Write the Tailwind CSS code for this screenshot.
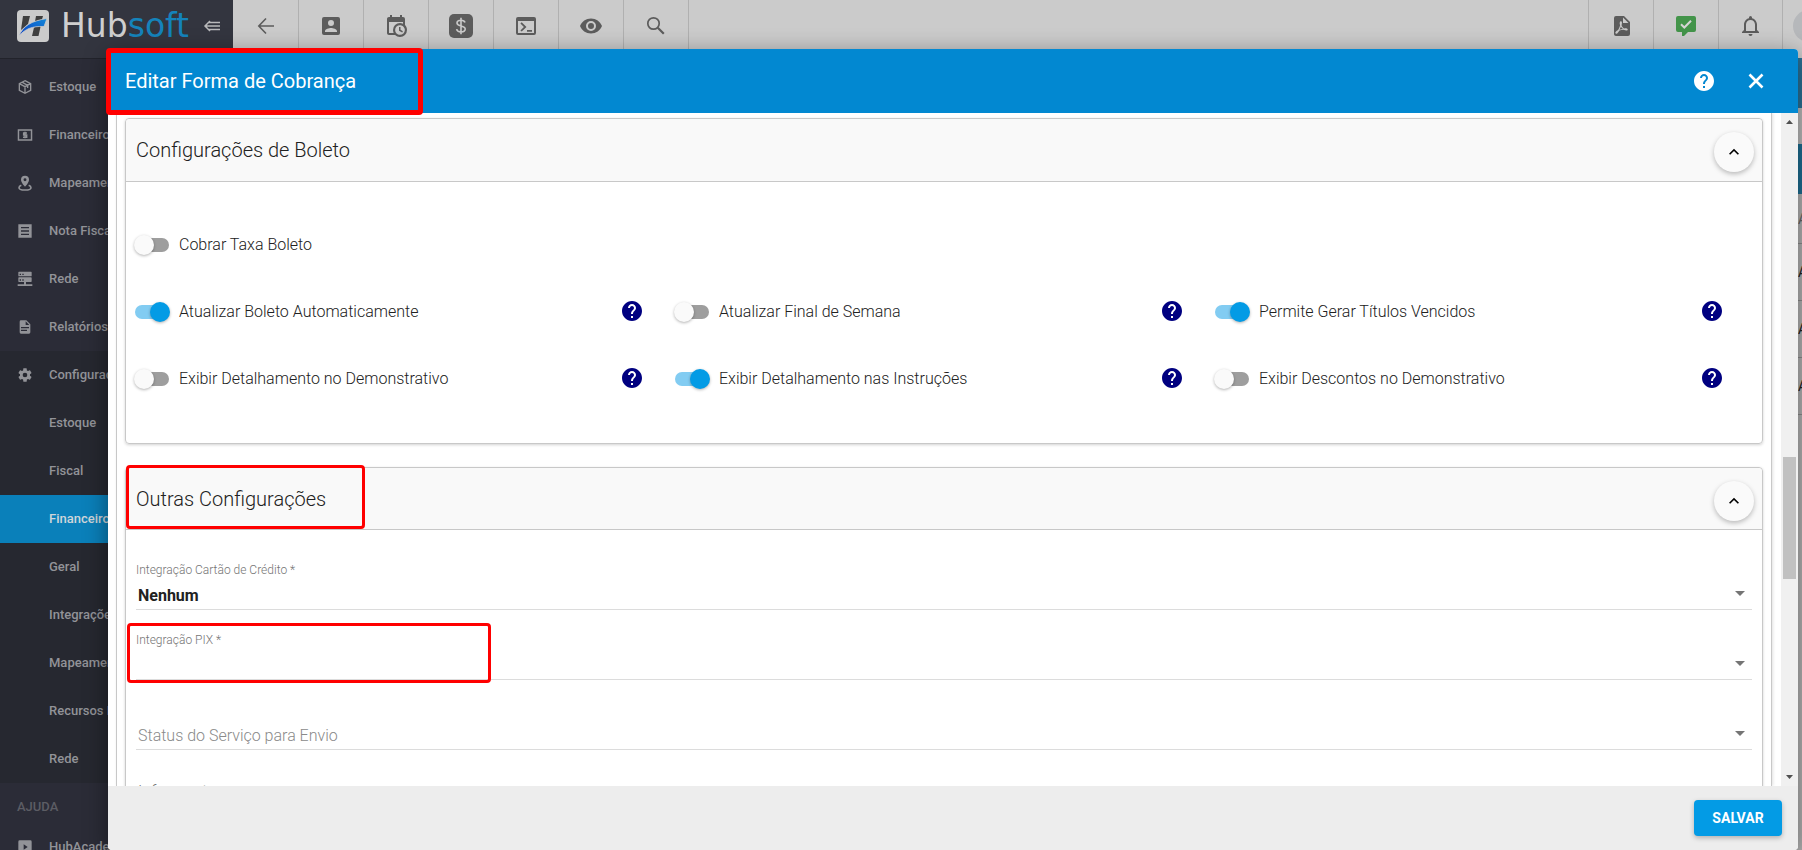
<!DOCTYPE html>
<html lang="pt-BR">
<head>
<meta charset="utf-8">
<title>Hubsoft - Editar Forma de Cobrança</title>
<script src="https://cdn.jsdelivr.net/npm/@tailwindcss/browser@4"></script>
</head>
<body class="relative flex h-screen overflow-hidden bg-[#b4b4b4] font-['Roboto',sans-serif] text-[#212121]">

<svg class="hidden" aria-hidden="true">
  <symbol id="help" viewBox="0 0 24 24"><path d="M12 2C6.48 2 2 6.48 2 12s4.48 10 10 10 10-4.48 10-10S17.52 2 12 2zm1 17h-2v-2h2v2zm2.07-7.75l-.9.92C13.45 12.9 13 13.5 13 15h-2v-.5c0-1.1.45-2.1 1.17-2.83l1.24-1.26c.37-.36.59-.86.59-1.41 0-1.1-.9-2-2-2s-2 .9-2 2H8c0-2.21 1.79-4 4-4s4 1.79 4 4c0 .88-.36 1.68-.93 2.25z"/></symbol>
  <symbol id="chevron" viewBox="0 0 24 24"><path d="M7.41 15.41L12 10.83l4.59 4.58L18 14l-6-6-6 6z"/></symbol>
  <symbol id="caret" viewBox="0 0 10 5"><path d="M0 0h10L5 5z"/></symbol>
</svg>

<!-- Sidebar -->
<aside class="flex w-[233px] shrink-0 flex-col bg-[#2b2c37] text-[13px] font-medium text-[#929398]">
  <div class="flex h-[59px] shrink-0 items-center border-b border-[#22232b] bg-[#33353f] pb-1.5 pl-[17px]">
    <svg class="h-8 w-8 shrink-0" viewBox="0 0 32 32">
      <defs><linearGradient id="swoosh" x1="0" y1="1" x2="1" y2="0"><stop offset="0" stop-color="#0a3fc4"/><stop offset="1" stop-color="#1288d8"/></linearGradient></defs>
      <rect width="32" height="32" rx="4" fill="#cbcbcb"/>
      <path d="M6 6h7l-2 8-7 6z" fill="#3f3f3f"/>
      <path d="M19 6h7l-1 3.500-7 2zM17 17.500l7-3L21.500 26H15z" fill="#3f3f3f"/>
      <path d="M2 26C6 16 14 11 30 8.500l-3 8C15 16 8 19 2 26z" fill="url(#swoosh)" stroke="#cbcbcb" stroke-width=".8"/>
    </svg>
    <span class="ml-3 w-[142px] font-['DejaVu_Sans',sans-serif] text-[33px] leading-8 font-normal text-[#cfcfcf]">Hub<span class="text-[#1583bb]">soft</span></span>
    <button type="button" aria-label="Recolher menu" class="text-[#b9b9bb]">
      <svg class="h-4 w-5" viewBox="0 0 20 16" fill="none" stroke="currentColor" stroke-width="1.500"><path d="M7 3L2 8l5 5M6 4.500h11M3 8h14M6 11.500h11"/></svg>
    </button>
  </div>
  <nav class="pt-1">
    <a href="#" class="flex h-12 items-center gap-4 pl-[17px]"><svg class="h-4 w-4 shrink-0" viewBox="0 0 24 24" fill="none" stroke="currentColor" stroke-width="2"><path d="M12 2.500l8.500 4.500v10L12 21.500 3.500 17V7zM3.500 7L12 11.500 20.500 7M12 11.500v10M7.500 4.800L16 9.500v4"/></svg>Estoque</a>
    <a href="#" class="flex h-12 items-center gap-4 pl-[17px]"><svg class="h-4 w-4 shrink-0" viewBox="0 0 24 24" fill="none" stroke="currentColor" stroke-width="2.200"><path d="M2.200 4.500h19.600v15H2.200z"/><path d="M15 9h-5v3h4.500v3.500H9M12 7v10"/></svg>Financeiro</a>
    <a href="#" class="flex h-12 items-center gap-4 pl-[17px] whitespace-nowrap"><svg class="h-4 w-4 shrink-0" viewBox="0 0 24 24"><path fill="currentColor" fill-rule="evenodd" d="M12 1a6 6 0 0 0-6 6c0 4.500 6 10.500 6 10.500S18 11.500 18 7a6 6 0 0 0-6-6zm0 8.200a2.200 2.200 0 1 1 0-4.400 2.200 2.200 0 0 1 0 4.400z"/><path d="M6.500 15.500C4 16.500 3 17.500 3 19c0 2 4 3.500 9 3.500s9-1.500 9-3.500c0-1.500-1-2.500-3.500-3.500" fill="none" stroke="currentColor" stroke-width="2.400"/></svg>Mapeamento</a>
    <a href="#" class="flex h-12 items-center gap-4 pl-[17px] whitespace-nowrap"><svg class="h-4 w-4 shrink-0" viewBox="0 0 24 24"><path fill="currentColor" fill-rule="evenodd" d="M2 2h20v20H2zM6 6v2h12V6zM6 11v2h12v-2zM6 16v2h12v-2z"/></svg>Nota Fiscal</a>
    <a href="#" class="flex h-12 items-center gap-4 pl-[17px]"><svg class="h-4 w-4 shrink-0" viewBox="0 0 24 24"><path fill="currentColor" fill-rule="evenodd" d="M3 1h18a1 1 0 0 1 1 1v5a1 1 0 0 1-1 1H3a1 1 0 0 1-1-1V2a1 1 0 0 1 1-1zm1 3v2h2V4zm4 0v2h2V4zM3 9.500h18a1 1 0 0 1 1 1v5a1 1 0 0 1-1 1h-7.500V20H23v2.500H1V20h9.500v-3.500H3a1 1 0 0 1-1-1v-5a1 1 0 0 1 1-1zm1 3v2h2v-2zm4 0v2h2v-2z"/></svg>Rede</a>
    <a href="#" class="flex h-12 items-center gap-4 pl-[17px]"><svg class="h-4 w-4 shrink-0" viewBox="0 0 24 24"><path fill="currentColor" d="M13 9h5.500L13 3.500V9M6 2h8l6 6v12a2 2 0 0 1-2 2H6a2 2 0 0 1-2-2V4a2 2 0 0 1 2-2m9 16v-2H6v2h9m3-4v-2H6v2h12z"/></svg>Relatórios</a>
    <div class="bg-[#262830]">
      <a href="#" class="flex h-12 items-center gap-4 pl-[17px] whitespace-nowrap"><svg class="h-4 w-4 shrink-0" viewBox="0 0 24 24"><path fill="currentColor" d="M12 15.500A3.500 3.500 0 0 1 8.500 12 3.500 3.500 0 0 1 12 8.500a3.500 3.500 0 0 1 3.500 3.500 3.500 3.500 0 0 1-3.500 3.500m7.430-2.530c.04-.32.070-.64.070-.97 0-.33-.03-.66-.07-1l2.110-1.630c.19-.15.240-.42.120-.64l-2-3.460c-.12-.22-.39-.31-.61-.22l-2.490 1c-.52-.39-1.060-.73-1.690-.98l-.37-2.650A.506.506 0 0 0 14 2h-4c-.25 0-.46.180-.5.420l-.37 2.650c-.63.250-1.170.590-1.690.980l-2.490-1c-.22-.09-.49 0-.61.220l-2 3.460c-.13.220-.07.490.120.640L4.570 11c-.04.340-.07.670-.07 1 0 .330.030.650.070.970l-2.110 1.660c-.19.150-.25.420-.12.640l2 3.460c.12.220.39.300.61.220l2.490-1.010c.52.400 1.060.740 1.690.990l.37 2.650c.04.240.25.420.5.420h4c.25 0 .46-.18.500-.42l.37-2.650c.63-.26 1.170-.59 1.690-.99l2.490 1.010c.22.080.49 0 .61-.22l2-3.460c.12-.22.070-.49-.12-.64l-2.110-1.660z"/></svg>Configurações</a>
      <a href="#" class="flex h-12 items-center pl-[49px]">Estoque</a>
      <a href="#" class="flex h-12 items-center pl-[49px]">Fiscal</a>
      <a href="#" class="flex h-12 items-center bg-[#0a80ba] pl-[49px] text-[#cfd6da]">Financeiro</a>
      <a href="#" class="flex h-12 items-center pl-[49px]">Geral</a>
      <a href="#" class="flex h-12 items-center pl-[49px]">Integrações</a>
      <a href="#" class="flex h-12 items-center pl-[49px]">Mapeamento</a>
      <a href="#" class="flex h-12 items-center pl-[49px]">Recursos Humanos</a>
      <a href="#" class="flex h-12 items-center pl-[49px]">Rede</a>
    </div>
    <h2 class="flex h-10 items-center pt-2 pl-[17px] text-[#5c5d64]">AJUDA</h2>
    <a href="#" class="flex h-12 items-center gap-4 pl-[17px]"><svg class="h-4 w-4 shrink-0" viewBox="0 0 24 24"><path fill="currentColor" fill-rule="evenodd" d="M4 2h16a2 2 0 0 1 2 2v16a2 2 0 0 1-2 2H4a2 2 0 0 1-2-2V4a2 2 0 0 1 2-2zm6 6v8l6-4z"/></svg>HubAcademy</a>
  </nav>
</aside>

<!-- Toolbar and page behind the dialog -->
<div class="flex min-w-0 grow flex-col">
  <header class="flex h-[58px] shrink-0 items-stretch bg-[#cbcbcb] text-[#5c5c5c]">
    <button type="button" aria-label="Voltar" class="flex w-[66px] items-center justify-center border-r border-[#b0b0b0] pb-1.5"><svg class="h-6 w-6" viewBox="0 0 24 24" fill="none" stroke="currentColor" stroke-width="1.600"><path d="M20 12H5M12 4.500L4.800 12l7.200 7.500"/></svg></button>
    <button type="button" aria-label="Clientes" class="flex w-[65px] items-center justify-center border-r border-[#b0b0b0] pb-1.5"><svg class="h-6 w-6" viewBox="0 0 24 24" fill="currentColor"><path d="M3 5v14a2 2 0 0 0 2 2h14a2 2 0 0 0 2-2V5a2 2 0 0 0-2-2H5a2 2 0 0 0-2 2zm12 4a3 3 0 0 1-6 0 3 3 0 0 1 6 0zm-9 8c0-2 4-3.100 6-3.100s6 1.100 6 3.100v1H6v-1z"/></svg></button>
    <button type="button" aria-label="Agenda" class="flex w-[65px] items-center justify-center border-r border-[#b0b0b0] pb-1.5"><svg class="h-6 w-6" viewBox="0 0 24 24" fill="currentColor"><path d="M15,13H16.500V15.820L18.940,17.230L18.190,18.530L15,16.690V13M19,8H5V19H9.670C9.240,18.090 9,17.070 9,16A7,7 0 0,1 16,9C17.070,9 18.090,9.240 19,9.670V8M5,21C3.890,21 3,20.100 3,19V5C3,3.890 3.890,3 5,3H6V1H8V3H16V1H18V3H19A2,2 0 0,1 21,5V11.100C22.240,12.360 23,14.090 23,16A7,7 0 0,1 16,23C14.090,23 12.360,22.240 11.100,21H5M16,11.150A4.850,4.850 0 0,0 11.150,16C11.150,18.680 13.320,20.850 16,20.850A4.850,4.850 0 0,0 20.850,16C20.850,13.320 18.680,11.150 16,11.150Z"/></svg></button>
    <button type="button" aria-label="Cobranças" class="flex w-[65px] items-center justify-center border-r border-[#b0b0b0] pb-1.5"><svg class="h-6 w-6" viewBox="0 0 24 24"><rect width="24" height="24" rx="5" fill="currentColor"/><path d="M16 8.500C15.500 7 14 6.200 12 6.200c-2.300 0-4 1-4 2.800 0 4 8.200 1.800 8.200 6 0 1.800-1.800 2.900-4.200 2.900-2.300 0-4-1-4.400-2.800M12 3.800v16.400" fill="none" stroke="#cbcbcb" stroke-width="1.600"/></svg></button>
    <button type="button" aria-label="Terminal" class="flex w-[65px] items-center justify-center border-r border-[#b0b0b0] pb-1.5"><svg class="h-6 w-6" viewBox="0 0 24 24" fill="currentColor"><path fill-rule="evenodd" d="M4 3h16a2 2 0 0 1 2 2v14a2 2 0 0 1-2 2H4a2 2 0 0 1-2-2V5a2 2 0 0 1 2-2zm0 4v12h16V7z"/><path d="M6.400 9.400l1.300-1.200 4.800 4.700-4.800 4.700-1.300-1.200 3.500-3.500zM13 16h5v1.700h-5z"/></svg></button>
    <button type="button" aria-label="Visualizar" class="flex w-[65px] items-center justify-center border-r border-[#b0b0b0] pb-1.5"><svg class="h-6 w-6" viewBox="0 0 24 24" fill="currentColor"><path d="M12 4.500C7 4.500 2.730 7.610 1 12c1.730 4.390 6 7.500 11 7.500s9.270-3.110 11-7.500c-1.730-4.390-6-7.500-11-7.500zM12 17a5 5 0 1 1 0-10 5 5 0 0 1 0 10zm0-8a3 3 0 1 0 0 6 3 3 0 0 0 0-6z"/></svg></button>
    <button type="button" aria-label="Buscar" class="flex w-[65px] items-center justify-center border-r border-[#b0b0b0] pb-1.5"><svg class="h-6 w-6" viewBox="0 0 24 24" fill="none" stroke="currentColor" stroke-width="1.700"><circle cx="9.500" cy="9.500" r="5.700"/><path d="M13.800 13.800l6 6" stroke-width="2.200"/></svg></button>
    <div class="grow"></div>
    <button type="button" aria-label="PDF" class="flex w-[65px] items-center justify-center border-l border-[#b0b0b0] pb-1.5"><svg class="h-6 w-6" viewBox="0 0 24 24" fill="currentColor"><path d="M14,9H19.500L14,3.500V9M7,2H15L21,8V20A2,2 0 0,1 19,22H7C5.890,22 5,21.100 5,20V4A2,2 0 0,1 7,2M11.930,12.440C12.340,13.340 12.860,14.080 13.460,14.590L13.870,14.910C13,15.070 11.800,15.350 10.530,15.840L10.420,15.880L10.920,14.840C11.370,13.970 11.700,13.180 11.930,12.440M18.410,16.250C18.590,16.070 18.680,15.840 18.690,15.590C18.720,15.390 18.670,15.200 18.570,15.040C18.280,14.570 17.530,14.350 16.290,14.350L15,14.420L14.130,13.840C13.500,13.320 12.930,12.410 12.530,11.280L12.570,11.140C12.900,9.810 13.210,8.200 12.550,7.540C12.390,7.380 12.170,7.300 11.940,7.300H11.700C11.330,7.300 11,7.690 10.910,8.070C10.540,9.400 10.760,10.130 11.130,11.340C10.880,12.230 10.560,13.250 10.050,14.280L9.090,16.080L8.200,16.570C7,17.320 6.430,18.160 6.320,18.690C6.280,18.880 6.300,19.050 6.370,19.230L6.880,19.590L7.320,19.700C8.130,19.700 9.050,18.750 10.290,16.630L10.470,16.560C11.500,16.230 12.780,16 14.500,15.810C15.530,16.320 16.740,16.550 17.500,16.550C17.940,16.550 18.240,16.440 18.410,16.250Z"/></svg></button>
    <button type="button" aria-label="Mensagens" class="flex w-[65px] items-center justify-center border-l border-[#b0b0b0] pb-1.5"><svg class="h-6 w-6" viewBox="0 0 24 24"><path d="M4 2h16a2 2 0 0 1 2 2v12a2 2 0 0 1-2 2h-6l-4 4H8v-4H4a2 2 0 0 1-2-2V4a2 2 0 0 1 2-2z" fill="#43944a"/><path d="M7 10.200l3.300 3.300L17 6.700" fill="none" stroke="#d5d5d5" stroke-width="2"/></svg></button>
    <button type="button" aria-label="Notificações" class="flex w-[65px] items-center justify-center border-x border-[#b0b0b0] pb-1.5"><svg class="h-6 w-6" viewBox="0 0 24 24" fill="currentColor"><path d="M16,17H7V10.500C7,8 9,6 11.500,6C14,6 16,8 16,10.500M18,16V10.500C18,7.430 15.860,4.860 13,4.180V3.500A1.500,1.500 0 0,0 11.500,2A1.500,1.500 0 0,0 10,3.500V4.180C7.130,4.860 5,7.430 5,10.500V16L3,18V19H20V18M11.500,22A2,2 0 0,0 13.500,20H9.500A2,2 0 0,0 11.500,22Z"/></svg></button>
    <div class="flex w-[19px] items-center overflow-hidden pb-1.5 pl-2.5"><div class="h-8 w-8 shrink-0 rounded-full bg-[#b6b8bb]"></div></div>
  </header>
  <main class="flex grow flex-col text-sm">
    <div class="h-[50px] bg-[#2b7398]"></div>
    <div class="h-9 bg-[#bdbdbd]"></div>
    <div class="h-[50px] bg-[#1d6f94]"></div>
    <div class="flex h-[50px] items-center justify-end border-b border-[#8d8d8d] text-[#666]"><span class="w-1 overflow-hidden">A</span></div>
    <div class="flex h-[57px] items-center justify-end border-b border-[#8d8d8d]"><span class="w-1 overflow-hidden">A</span></div>
    <div class="flex h-[57px] items-center justify-end border-b border-[#8d8d8d]"><span class="w-1 overflow-hidden">A</span></div>
    <div class="flex h-[57px] items-center justify-end border-b border-[#8d8d8d]"><span class="w-1 overflow-hidden">A</span></div>
  </main>
</div>

<!-- Dialog -->
<div class="absolute inset-0 flex pt-[49px] pr-1 pl-[108px]">
  <section role="dialog" aria-labelledby="dlg-title" class="relative flex min-w-0 grow flex-col rounded bg-white shadow-[0_6px_24px_rgba(0,0,0,0.45)]">
    <header class="flex h-16 shrink-0 items-center rounded-t bg-[#0288d1] pr-[30px] pl-[17px] text-white">
      <h1 id="dlg-title" class="grow text-xl">Editar Forma de Cobrança</h1>
      <button type="button" aria-label="Ajuda" class="mr-7"><svg class="h-6 w-6 fill-white"><use href="#help"/></svg></button>
      <button type="button" aria-label="Fechar"><svg class="h-6 w-6" viewBox="0 0 24 24" fill="none" stroke="currentColor" stroke-width="2.600"><path d="M5.500 5.500l13 13M18.500 5.500l-13 13"/></svg></button>
    </header>
    <div class="pointer-events-none absolute -top-px -left-0.5 h-[67px] w-[317px] rounded-sm border-5 border-[#f00]"></div>

    <div class="flex min-h-0 grow overflow-hidden">
      <div class="min-w-0 grow pr-[9px] pl-2">
        <div class="h-full border-x border-[#c8c8c8] px-2 pt-[5px] shadow-[1px_0_3px_rgba(0,0,0,0.12)]">

          <section class="rounded border border-[#c8c8c8] shadow-[0_1px_3px_rgba(0,0,0,0.18)]">
            <header class="flex h-[63px] items-center rounded-t border-b border-[#c8c8c8] bg-[#f9f9f9] pr-2 pl-2.5">
              <h2 class="grow text-xl font-light">Configurações de Boleto</h2>
              <button type="button" aria-label="Recolher" class="mt-1 flex h-10 w-10 items-center justify-center rounded-full bg-[#fafafa] shadow-[0_2px_5px_rgba(0,0,0,0.26)]"><svg class="h-5 w-5"><use href="#chevron"/></svg></button>
            </header>
            <div class="grid grid-cols-3 px-2 pt-[29px] pb-[31px] font-light">
              <div class="col-span-3 flex h-[67px] items-center">
                <label class="flex items-center gap-[9px]"><input type="checkbox" class="relative h-5 w-9 appearance-none before:absolute before:top-[3px] before:left-px before:h-3.5 before:w-[34px] before:rounded-full before:bg-[#9e9e9e] after:absolute after:top-0 after:left-0 after:h-5 after:w-5 after:rounded-full after:bg-[#fafafa] after:shadow-[0_1px_3px_rgba(0,0,0,0.3)] checked:before:bg-[#82ccf2] checked:after:left-4 checked:after:bg-[#039be5]">Cobrar Taxa Boleto</label>
              </div>
              <div class="flex h-[67px] items-center justify-between pr-[30px]">
                <label class="flex items-center gap-[9px]"><input type="checkbox" checked class="relative h-5 w-9 appearance-none before:absolute before:top-[3px] before:left-px before:h-3.5 before:w-[34px] before:rounded-full before:bg-[#9e9e9e] after:absolute after:top-0 after:left-0 after:h-5 after:w-5 after:rounded-full after:bg-[#fafafa] after:shadow-[0_1px_3px_rgba(0,0,0,0.3)] checked:before:bg-[#82ccf2] checked:after:left-4 checked:after:bg-[#039be5]">Atualizar Boleto Automaticamente</label>
                <button type="button" aria-label="Ajuda" class="pb-0.5"><svg class="h-6 w-6 fill-[#000080]"><use href="#help"/></svg></button>
              </div>
              <div class="flex h-[67px] items-center justify-between pr-[30px]">
                <label class="flex items-center gap-[9px]"><input type="checkbox" class="relative h-5 w-9 appearance-none before:absolute before:top-[3px] before:left-px before:h-3.5 before:w-[34px] before:rounded-full before:bg-[#9e9e9e] after:absolute after:top-0 after:left-0 after:h-5 after:w-5 after:rounded-full after:bg-[#fafafa] after:shadow-[0_1px_3px_rgba(0,0,0,0.3)] checked:before:bg-[#82ccf2] checked:after:left-4 checked:after:bg-[#039be5]">Atualizar Final de Semana</label>
                <button type="button" aria-label="Ajuda" class="pb-0.5"><svg class="h-6 w-6 fill-[#000080]"><use href="#help"/></svg></button>
              </div>
              <div class="flex h-[67px] items-center justify-between pr-[30px]">
                <label class="flex items-center gap-[9px]"><input type="checkbox" checked class="relative h-5 w-9 appearance-none before:absolute before:top-[3px] before:left-px before:h-3.5 before:w-[34px] before:rounded-full before:bg-[#9e9e9e] after:absolute after:top-0 after:left-0 after:h-5 after:w-5 after:rounded-full after:bg-[#fafafa] after:shadow-[0_1px_3px_rgba(0,0,0,0.3)] checked:before:bg-[#82ccf2] checked:after:left-4 checked:after:bg-[#039be5]">Permite Gerar Títulos Vencidos</label>
                <button type="button" aria-label="Ajuda" class="pb-0.5"><svg class="h-6 w-6 fill-[#000080]"><use href="#help"/></svg></button>
              </div>
              <div class="flex h-[67px] items-center justify-between pr-[30px]">
                <label class="flex items-center gap-[9px]"><input type="checkbox" class="relative h-5 w-9 appearance-none before:absolute before:top-[3px] before:left-px before:h-3.5 before:w-[34px] before:rounded-full before:bg-[#9e9e9e] after:absolute after:top-0 after:left-0 after:h-5 after:w-5 after:rounded-full after:bg-[#fafafa] after:shadow-[0_1px_3px_rgba(0,0,0,0.3)] checked:before:bg-[#82ccf2] checked:after:left-4 checked:after:bg-[#039be5]">Exibir Detalhamento no Demonstrativo</label>
                <button type="button" aria-label="Ajuda" class="pb-0.5"><svg class="h-6 w-6 fill-[#000080]"><use href="#help"/></svg></button>
              </div>
              <div class="flex h-[67px] items-center justify-between pr-[30px]">
                <label class="flex items-center gap-[9px]"><input type="checkbox" checked class="relative h-5 w-9 appearance-none before:absolute before:top-[3px] before:left-px before:h-3.5 before:w-[34px] before:rounded-full before:bg-[#9e9e9e] after:absolute after:top-0 after:left-0 after:h-5 after:w-5 after:rounded-full after:bg-[#fafafa] after:shadow-[0_1px_3px_rgba(0,0,0,0.3)] checked:before:bg-[#82ccf2] checked:after:left-4 checked:after:bg-[#039be5]">Exibir Detalhamento nas Instruções</label>
                <button type="button" aria-label="Ajuda" class="pb-0.5"><svg class="h-6 w-6 fill-[#000080]"><use href="#help"/></svg></button>
              </div>
              <div class="flex h-[67px] items-center justify-between pr-[30px]">
                <label class="flex items-center gap-[9px]"><input type="checkbox" class="relative h-5 w-9 appearance-none before:absolute before:top-[3px] before:left-px before:h-3.5 before:w-[34px] before:rounded-full before:bg-[#9e9e9e] after:absolute after:top-0 after:left-0 after:h-5 after:w-5 after:rounded-full after:bg-[#fafafa] after:shadow-[0_1px_3px_rgba(0,0,0,0.3)] checked:before:bg-[#82ccf2] checked:after:left-4 checked:after:bg-[#039be5]">Exibir Descontos no Demonstrativo</label>
                <button type="button" aria-label="Ajuda" class="pb-0.5"><svg class="h-6 w-6 fill-[#000080]"><use href="#help"/></svg></button>
              </div>
            </div>
          </section>

          <section class="mt-[23px] rounded border border-[#c8c8c8] shadow-[0_1px_3px_rgba(0,0,0,0.18)]">
            <header class="relative flex h-[62px] items-center rounded-t border-b border-[#c8c8c8] bg-[#f9f9f9] pr-2 pl-2.5">
              <h2 class="grow text-xl font-light">Outras Configurações</h2>
              <button type="button" aria-label="Recolher" class="mt-1 flex h-10 w-10 items-center justify-center rounded-full bg-[#fafafa] shadow-[0_2px_5px_rgba(0,0,0,0.26)]"><svg class="h-5 w-5"><use href="#chevron"/></svg></button>
              <div class="pointer-events-none absolute -top-[3px] left-0 h-16 w-[239px] rounded-sm border-3 border-[#f00]"></div>
            </header>
            <div class="flex flex-col px-2.5 pt-2.5 font-light">
              <div class="flex h-[70px] flex-col justify-end border-b border-[#dcdcdc]">
                <label for="cartao" class="text-xs text-[#757575]">Integração Cartão de Crédito *</label>
                <div class="flex h-[31px] items-center">
                  <select id="cartao" class="h-[31px] grow appearance-none pt-1 pl-0.5 font-bold text-[#212121]"><option>Nenhum</option></select>
                  <svg class="mr-[7px] h-[5px] w-2.5 fill-[#757575]"><use href="#caret"/></svg>
                </div>
              </div>
              <div class="relative flex h-[70px] flex-col justify-end border-b border-[#dcdcdc]">
                <label for="pix" class="text-xs text-[#757575]">Integração PIX *</label>
                <div class="flex h-[31px] items-center">
                  <select id="pix" class="h-[31px] grow appearance-none pt-1 pl-0.5"><option></option></select>
                  <svg class="mr-[7px] h-[5px] w-2.5 fill-[#757575]"><use href="#caret"/></svg>
                </div>
                <div class="pointer-events-none absolute -bottom-1 -left-[9px] h-[60px] w-[364px] rounded-sm border-3 border-[#f00]"></div>
              </div>
              <div class="flex h-[70px] flex-col justify-end border-b border-[#dcdcdc]">
                <div class="flex h-[31px] items-center">
                  <select aria-label="Status do Serviço para Envio" class="h-[31px] grow appearance-none pt-1 pl-0.5 font-light text-[#8a8a8a]"><option>Status do Serviço para Envio</option></select>
                  <svg class="mr-[7px] h-[5px] w-2.5 fill-[#757575]"><use href="#caret"/></svg>
                </div>
              </div>
              <label for="informante" class="pt-[30px] pl-0.5 text-[#757575]">Informante</label>
              <input id="informante" type="text" class="h-8 border-b border-[#dcdcdc]">
            </div>
          </section>
        </div>
      </div>

      <!-- Scrollbar -->
      <div class="flex w-[17px] shrink-0 flex-col items-center bg-[#f0f0f0]">
        <svg class="my-[7px] h-1 w-[7px] shrink-0 fill-[#505050]" viewBox="0 0 7 4"><path d="M0 4h7L3.500 0z"/></svg>
        <div class="grow-[327]"></div>
        <div class="h-[122px] w-[13px] shrink-0 bg-[#c1c1c1]"></div>
        <div class="grow-[190]"></div>
        <svg class="my-[7px] h-1 w-[7px] shrink-0 fill-[#505050]" viewBox="0 0 7 4"><path d="M0 0h7L3.500 4z"/></svg>
      </div>
    </div>

    <footer class="flex h-16 shrink-0 items-center justify-end rounded-b bg-[#ededed] pr-4">
      <button type="button" class="h-9 w-[88px] rounded bg-[#039be5] text-sm font-bold text-white shadow-[0_2px_5px_rgba(0,0,0,0.26)]">SALVAR</button>
    </footer>
  </section>
</div>
</body>
</html>
